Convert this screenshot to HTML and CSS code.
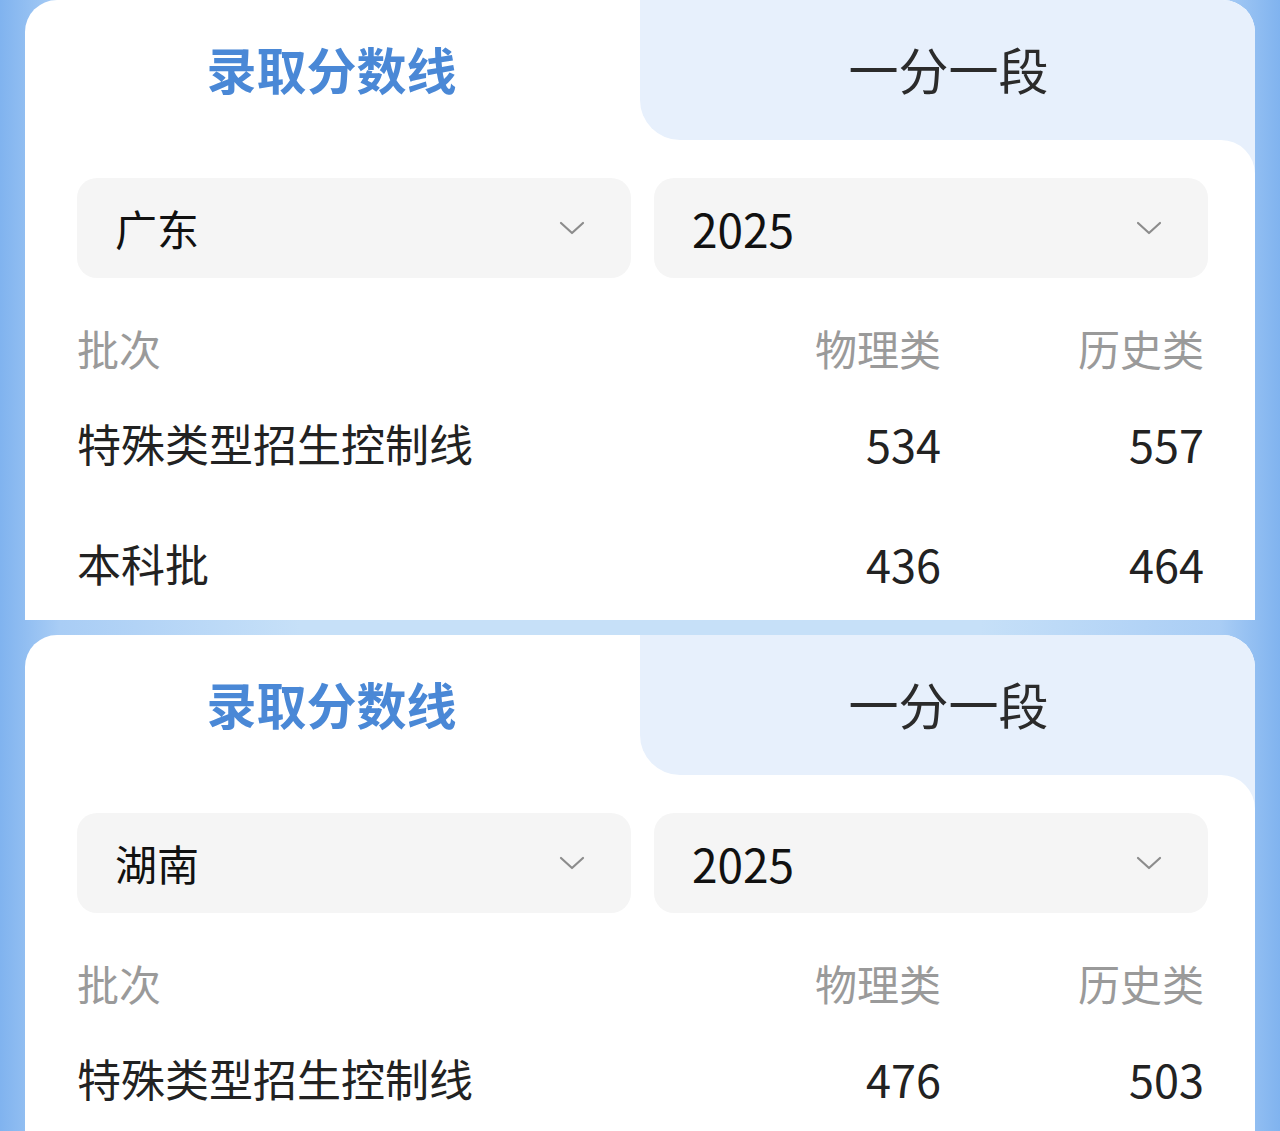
FILE: index.html
```html
<!DOCTYPE html>
<html lang="zh-CN">
<head>
<meta charset="utf-8">
<title>录取分数线</title>
<link rel="stylesheet" href="styles.css">
</head>
<body>
<div class="page">
  <section class="card">
    <div class="tabs">
      <div class="tab tab-active">录取分数线</div>
      <div class="tab tab-idle">一分一段</div>
    </div>
    <div class="body-wrap">
      <div class="body">
        <div class="selects">
          <div class="select"><span class="select-text">广东</span>
            <svg class="chev" viewBox="0 0 26 14"><path d="M2 2 L13 12 L24 2" fill="none" stroke="#8c8c8c" stroke-width="2.2" stroke-linecap="round" stroke-linejoin="round"/></svg>
          </div>
          <div class="select"><span class="select-text num">2025</span>
            <svg class="chev" viewBox="0 0 26 14"><path d="M2 2 L13 12 L24 2" fill="none" stroke="#8c8c8c" stroke-width="2.2" stroke-linecap="round" stroke-linejoin="round"/></svg>
          </div>
        </div>
        <div class="table">
          <div class="row head"><span>批次</span><span class="r">物理类</span><span class="r">历史类</span></div>
          <div class="row r1"><span class="label">特殊类型招生控制线</span><span class="r num">534</span><span class="r num">557</span></div>
          <div class="row r2"><span class="label">本科批</span><span class="r num">436</span><span class="r num">464</span></div>
        </div>
      </div>
    </div>
  </section>
  <section class="card card-short">
    <div class="tabs">
      <div class="tab tab-active">录取分数线</div>
      <div class="tab tab-idle">一分一段</div>
    </div>
    <div class="body-wrap">
      <div class="body">
        <div class="selects">
          <div class="select"><span class="select-text">湖南</span>
            <svg class="chev" viewBox="0 0 26 14"><path d="M2 2 L13 12 L24 2" fill="none" stroke="#8c8c8c" stroke-width="2.2" stroke-linecap="round" stroke-linejoin="round"/></svg>
          </div>
          <div class="select"><span class="select-text num">2025</span>
            <svg class="chev" viewBox="0 0 26 14"><path d="M2 2 L13 12 L24 2" fill="none" stroke="#8c8c8c" stroke-width="2.2" stroke-linecap="round" stroke-linejoin="round"/></svg>
          </div>
        </div>
        <div class="table">
          <div class="row head"><span>批次</span><span class="r">物理类</span><span class="r">历史类</span></div>
          <div class="row r1"><span class="label">特殊类型招生控制线</span><span class="r num">476</span><span class="r num">503</span></div>
        </div>
      </div>
    </div>
  </section>
</div>
</body>
</html>
```

FILE: styles.css
```css
html, body {
  margin: 0;
  padding: 0;
}
body {
  width: 1280px;
  height: 1131px;
  overflow: hidden;
  font-family: "Noto Sans CJK SC", "Noto Sans", sans-serif;
  background: linear-gradient(to right, #80b3ef 0px, #a9cdf5 60px, #c6e0f8 300px, #c6e0f8 980px, #a9cdf5 1220px, #80b3ef 1280px);
}
.page {
  display: flex;
  flex-direction: column;
  gap: 15px;
  padding: 0 25px;
}
.card {
  height: 620px;
  overflow: hidden;
  border-radius: 32px 32px 0 0;
  background: #ffffff;
  flex-shrink: 0;
}
.card-short {
  height: 496px;
}
.tabs {
  display: grid;
  grid-template-columns: 615px 1fr;
  height: 140px;
}
.tab {
  display: flex;
  align-items: center;
  justify-content: center;
  font-size: 50px;
  line-height: 1;
  padding-bottom: 4px;
}
.tab-active {
  color: #4a88d6;
  font-weight: 700;
  padding-right: 2px;
}
.tab-idle {
  color: #2b2b2b;
  background: #e7f0fc;
  border-radius: 0 32px 0 40px;
  padding-left: 2px;
}
.body-wrap {
  background: linear-gradient(to right, #ffffff 50%, #e7f0fc 50%);
}
.body {
  background: #ffffff;
  border-radius: 0 34px 0 0;
  padding: 38px 51px 0 52px;
  height: 480px;
}
.selects {
  display: grid;
  grid-template-columns: 554px 554px;
  gap: 23px;
  margin-right: -4px;
}
.select {
  height: 100px;
  background: #f5f5f5;
  border-radius: 20px;
  display: flex;
  align-items: center;
  justify-content: space-between;
  padding: 0 46px 0 38px;
}
.select-text {
  font-size: 42px;
  color: #111;
  line-height: 1;
}
.select-text.num {
  font-size: 46px;
  font-weight: 400;
}
.chev {
  width: 26px;
  height: 14px;
}
.table {
  display: flex;
  flex-direction: column;
  padding-top: 22px;
}
.row {
  display: grid;
  grid-template-columns: 1fr 200px 263px;
  align-items: center;
  font-size: 43px;
  color: #222;
  line-height: 1;
}
.row .label {
  font-size: 44px;
}
.row .r {
  text-align: right;
}
.row.head {
  height: 96px;
  font-size: 42px;
  color: #9a9a9a;
}
.row.r1 {
  height: 94px;
}
.row.r2 {
  height: 96px;
  margin-top: 25px;
}
.num {
  font-size: 45px;
}
```
